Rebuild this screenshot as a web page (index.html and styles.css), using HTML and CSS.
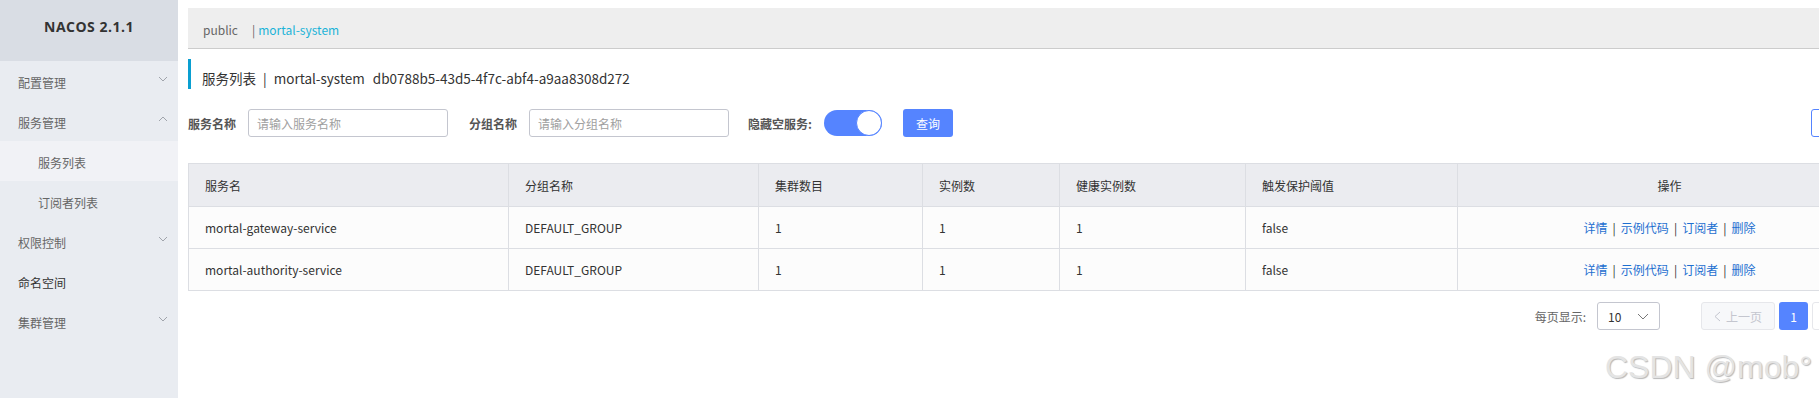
FILE: index.html
```html
<!DOCTYPE html>
<html lang="zh-CN">
<head>
    <meta charset="UTF-8">
    <meta name="viewport" content="width=device-width, initial-scale=1.0">
    <title>Nacos - 服务列表</title>
    <link rel="stylesheet" href="styles.css">
</head>
<body>

    <!-- 侧边栏 -->
    <div class="sidebar">
        <div class="logo">NACOS 2.1.1</div>
        <div class="nav">
            <div class="nav-item">
                <span>配置管理</span>
                <svg class="chevron" width="10" height="6" viewBox="0 0 10 6"><polyline points="1,1 5,5 9,1"/></svg>
            </div>
            <div class="nav-item">
                <span>服务管理</span>
                <svg class="chevron" width="10" height="6" viewBox="0 0 10 6"><polyline points="1,5 5,1 9,5"/></svg>
            </div>
            <div class="nav-sub active">服务列表</div>
            <div class="nav-sub">订阅者列表</div>
            <div class="nav-item">
                <span>权限控制</span>
                <svg class="chevron" width="10" height="6" viewBox="0 0 10 6"><polyline points="1,1 5,5 9,1"/></svg>
            </div>
            <div class="nav-item nav-link">命名空间</div>
            <div class="nav-item">
                <span>集群管理</span>
                <svg class="chevron" width="10" height="6" viewBox="0 0 10 6"><polyline points="1,1 5,5 9,1"/></svg>
            </div>
        </div>
    </div>

    <!-- 主内容 -->
    <div class="main">
        <div class="content">
            <div class="namespace-bar">
                <span class="ns">public</span>
                <span class="ns-sep">|</span>
                <span class="ns ns-active">mortal-system</span>
            </div>

            <div class="page-title">
                服务列表 <span class="title-sep">|</span> mortal-system <span class="ns-id">db0788b5-43d5-4f7c-abf4-a9aa8308d272</span>
            </div>

            <div class="search-row">
                <label class="field-label">服务名称</label>
                <input class="field-input" type="text" placeholder="请输入服务名称">
                <label class="field-label label-gap">分组名称</label>
                <input class="field-input" type="text" placeholder="请输入分组名称">
                <label class="field-label label-gap switch-label">隐藏空服务:</label>
                <div class="switch"><div class="knob"></div></div>
                <button class="btn-primary">查询</button>
                <button class="btn-outline">创建服务</button>
            </div>

            <table class="service-table">
                <colgroup>
                    <col style="width: 320px">
                    <col style="width: 250px">
                    <col style="width: 164px">
                    <col style="width: 137px">
                    <col style="width: 186px">
                    <col style="width: 212px">
                    <col style="width: 424px">
                </colgroup>
                <thead>
                    <tr>
                        <th>服务名</th>
                        <th>分组名称</th>
                        <th>集群数目</th>
                        <th>实例数</th>
                        <th>健康实例数</th>
                        <th>触发保护阈值</th>
                        <th class="center">操作</th>
                    </tr>
                </thead>
                <tbody>
                    <tr>
                        <td>mortal-gateway-service</td>
                        <td>DEFAULT_GROUP</td>
                        <td>1</td>
                        <td>1</td>
                        <td>1</td>
                        <td>false</td>
                        <td class="center">
                            <a href="#">详情</a><span class="op-sep">|</span><a href="#">示例代码</a><span class="op-sep">|</span><a href="#">订阅者</a><span class="op-sep">|</span><a href="#">删除</a>
                        </td>
                    </tr>
                    <tr>
                        <td>mortal-authority-service</td>
                        <td>DEFAULT_GROUP</td>
                        <td>1</td>
                        <td>1</td>
                        <td>1</td>
                        <td>false</td>
                        <td class="center">
                            <a href="#">详情</a><span class="op-sep">|</span><a href="#">示例代码</a><span class="op-sep">|</span><a href="#">订阅者</a><span class="op-sep">|</span><a href="#">删除</a>
                        </td>
                    </tr>
                </tbody>
            </table>

            <div class="pagination">
                <span class="page-label">每页显示:</span>
                <div class="page-size">
                    <span>10</span>
                    <svg width="12" height="7" viewBox="0 0 12 7"><polyline points="1,1 6,6 11,1"/></svg>
                </div>
                <button class="page-btn disabled">
                    <svg width="7" height="11" viewBox="0 0 7 11"><polyline points="6,1 1,5.5 6,10"/></svg>
                    上一页
                </button>
                <button class="page-num current">1</button>
                <button class="page-btn">下一页</button>
            </div>
        </div>
    </div>

    <div class="watermark">CSDN @mob°</div>

</body>
</html>
```

FILE: styles.css
```css
/* 基础 */
body {
    margin: 0;
    padding: 0;
    height: 398px;
    display: flex;
    overflow: hidden;
    font-family: "Noto Sans CJK SC", "Noto Sans", sans-serif;
    font-size: 12px;
    color: #333;
    background-color: #fff;
}

/* 侧边栏 */
.sidebar {
    width: 178px;
    flex-shrink: 0;
    background-color: #e9ecf1;
}

.logo {
    height: 61px;
    line-height: 54px;
    text-align: center;
    background-color: #d9dde4;
    font-family: "Open Sans", "Noto Sans", sans-serif;
    font-weight: bold;
    font-size: 14px;
    letter-spacing: 0.5px;
    color: #333;
}

.nav-item {
    height: 40px;
    padding: 2px 10px 0 18px;
    box-sizing: border-box;
    display: flex;
    align-items: center;
    justify-content: space-between;
    color: #666;
}

.nav-link {
    color: #333;
}

.chevron {
    fill: none;
    stroke: #a0a4ab;
    stroke-width: 1;
    margin-top: -7px;
}

.nav-sub {
    height: 40px;
    padding: 2px 0 0 38px;
    box-sizing: border-box;
    display: flex;
    align-items: center;
    color: #666;
}

.nav-sub.active {
    background-color: #f1f2f6;
}

/* 主区域 */
.main {
    flex: 1;
    overflow: hidden;
    padding: 8px 0 0 10px;
}

.content {
    width: 1698px;
}

.namespace-bar {
    height: 41px;
    box-sizing: border-box;
    padding: 3px 0 0 15px;
    display: flex;
    align-items: center;
    background-color: #eee;
    border-bottom: 1px solid #ccc;
}

.ns {
    color: #666;
}

.ns-sep {
    color: #666;
    margin: 0 3px 0 14px;
}

.ns-active {
    color: #1ab3d8;
}

.page-title {
    margin-top: 10px;
    height: 26px;
    padding-top: 4px;
    line-height: 30px;
    border-left: 3px solid #0a9fd1;
    padding-left: 11px;
    font-size: 13.5px;
    color: #333;
}

.title-sep {
    margin: 0 4px;
}

.ns-id {
    margin-left: 5px;
}

/* 搜索 */
.search-row {
    margin-top: 20px;
    display: flex;
    align-items: center;
    height: 28px;
}

.field-label {
    font-weight: bold;
    color: #555;
    margin-right: 12px;
}

.label-gap {
    margin-left: 21px;
}

.switch-label {
    margin-left: 19px;
    margin-right: 12px;
}

.field-input {
    width: 200px;
    height: 28px;
    box-sizing: border-box;
    border: 1px solid #c4c6cf;
    border-radius: 3px;
    padding: 0 8px;
    font-family: inherit;
    font-size: 12px;
    color: #333;
}

.field-input::placeholder {
    color: #a0a0a0;
}

.switch {
    width: 58px;
    height: 26px;
    border-radius: 13px;
    background-color: #5584ff;
    position: relative;
}

.knob {
    position: absolute;
    right: 0;
    top: 0;
    width: 24px;
    height: 24px;
    border-radius: 50%;
    background-color: #fff;
    border: 1px solid #5584ff;
}

.btn-primary {
    margin-left: 21px;
    width: 50px;
    height: 28px;
    border: none;
    border-radius: 3px;
    background-color: #5584ff;
    color: #fff;
    font-family: inherit;
    font-size: 12px;
}

.btn-outline {
    margin-left: auto;
    width: 75px;
    height: 28px;
    border: 1px solid #5584ff;
    border-radius: 3px;
    background-color: #fff;
    color: #5584ff;
    font-family: inherit;
    font-size: 12px;
}

/* 表格 */
.service-table {
    margin-top: 26px;
    width: 1693px;
    table-layout: fixed;
    border-collapse: collapse;
}

.service-table th,
.service-table td {
    border: 1px solid #dcdee3;
    padding: 0 16px;
    text-align: left;
    font-weight: normal;
    color: #333;
}

.service-table th {
    height: 42px;
    background-color: #ebecf0;
}

.service-table td {
    height: 41px;
    background-color: #fcfcfc;
}

.service-table .center {
    text-align: center;
}

.service-table a {
    color: #1e6fd0;
    text-decoration: none;
}

.op-sep {
    color: #333;
    margin: 0 5px;
}

/* 分页 */
.pagination {
    margin-top: 11px;
    display: flex;
    align-items: center;
    justify-content: flex-end;
    height: 28px;
}

.page-label {
    color: #666;
    margin-right: 11px;
}

.page-size {
    width: 63px;
    height: 28px;
    box-sizing: border-box;
    border: 1px solid #c4c6cf;
    border-radius: 3px;
    display: flex;
    align-items: center;
    justify-content: space-between;
    padding: 0 10px 0 10px;
    color: #333;
}

.page-size svg {
    fill: none;
    stroke: #777;
    stroke-width: 1;
}

.page-btn {
    margin-left: 41px;
    width: 74px;
    height: 28px;
    border: 1px solid #e6e7eb;
    border-radius: 3px;
    background-color: #fff;
    color: #333;
    font-family: inherit;
    font-size: 12px;
    display: flex;
    align-items: center;
    justify-content: center;
    gap: 5px;
}

.page-btn:last-child {
    margin-left: 4px;
}

.page-btn.disabled {
    background-color: #f7f8fa;
    color: #c4c6cf;
}

.page-btn svg {
    fill: none;
    stroke: #c4c6cf;
    stroke-width: 1;
}

.page-num {
    margin-left: 4px;
    width: 29px;
    height: 28px;
    border: none;
    border-radius: 3px;
    font-family: inherit;
    font-size: 12px;
}

.page-num.current {
    background-color: #5584ff;
    color: #fff;
}

/* 水印 */
.watermark {
    position: absolute;
    left: 1605px;
    top: 349px;
    font-family: "Liberation Sans", Arial, sans-serif;
    font-size: 32px;
    color: #e4e4e4;
    text-shadow: 1px 1px 1px #b8b8b8;
    white-space: nowrap;
}
```
